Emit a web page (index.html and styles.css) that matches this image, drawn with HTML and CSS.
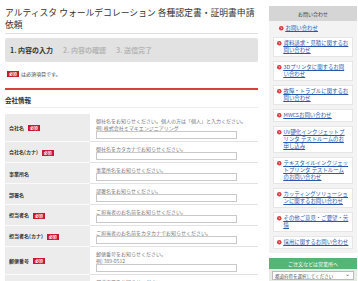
FILE: index.html
```html
<!DOCTYPE html>
<html lang="ja">
<head>
    <meta charset="UTF-8">
    <title>各種認定書・証明書申請依頼</title>
    <link rel="stylesheet" href="styles.css">
</head>
<body>
    <div class="page">
        <!-- Main form -->
        <main class="main">
            <h1 class="title">アルティスタ ウォールデコレーション 各種認定書・証明書申請依頼</h1>

            <ol class="steps">
                <li class="step current">1. 内容の入力</li>
                <li class="step">2. 内容の確認</li>
                <li class="step">3. 送信完了</li>
            </ol>

            <p class="req-note"><span class="req">必須</span>は必須項目です。</p>

            <div class="section">
                <h2 class="section-title">会社情報</h2>
                <table class="form-table">
                    <tr>
                        <th>会社名<span class="req">必須</span></th>
                        <td>
                            <p class="desc">御社名をお知らせください。個人の方は「個人」と入力ください。<br>例) 株式会社ミマキエンジニアリング</p>
                            <div class="input"></div>
                        </td>
                    </tr>
                    <tr>
                        <th>会社名(カナ)<span class="req">必須</span></th>
                        <td>
                            <p class="desc">御社名をカタカナでお知らせください。</p>
                            <div class="input"></div>
                        </td>
                    </tr>
                    <tr>
                        <th>事業所名</th>
                        <td>
                            <p class="desc">事業所名をお知らせください。</p>
                            <div class="input"></div>
                        </td>
                    </tr>
                    <tr>
                        <th>部署名</th>
                        <td>
                            <p class="desc">部署名をお知らせください。</p>
                            <div class="input"></div>
                        </td>
                    </tr>
                    <tr>
                        <th>担当者名<span class="req">必須</span></th>
                        <td>
                            <p class="desc">ご担当者のお名前をお知らせください。</p>
                            <div class="input"></div>
                        </td>
                    </tr>
                    <tr>
                        <th>担当者名(カナ)<span class="req">必須</span></th>
                        <td>
                            <p class="desc">ご担当者のお名前をカタカナでお知らせください。</p>
                            <div class="input"></div>
                        </td>
                    </tr>
                    <tr>
                        <th>郵便番号<span class="req">必須</span></th>
                        <td>
                            <p class="desc">郵便番号をお知らせください。<br>例) 389-0512</p>
                            <div class="input"></div>
                        </td>
                    </tr>
                    <tr>
                        <th>都道府県<span class="req">必須</span></th>
                        <td>
                            <p class="desc">都道府県をお知らせください。</p>
                            <div class="input"></div>
                        </td>
                    </tr>
                </table>
            </div>
        </main>

        <!-- Sidebar -->
        <aside class="side">
            <div class="side-head">お問い合わせ</div>
            <div class="side-body">
                <a class="side-top" href="#"><svg class="ico" viewBox="0 0 10 10"><circle cx="5" cy="5" r="5"/><path d="M4 2.8 L6.2 5 L4 7.2"/></svg><span>お問い合わせ</span></a>
                <ul class="side-list">
                    <li><a href="#"><svg class="ico" viewBox="0 0 10 10"><circle cx="5" cy="5" r="5"/><path d="M4 2.8 L6.2 5 L4 7.2"/></svg><span>資料請求・見積に関するお問い合わせ</span></a></li>
                    <li><a href="#"><svg class="ico" viewBox="0 0 10 10"><circle cx="5" cy="5" r="5"/><path d="M4 2.8 L6.2 5 L4 7.2"/></svg><span>3Dプリンタに関するお問い合わせ</span></a></li>
                    <li><a href="#"><svg class="ico" viewBox="0 0 10 10"><circle cx="5" cy="5" r="5"/><path d="M4 2.8 L6.2 5 L4 7.2"/></svg><span>故障・トラブルに関するお問い合わせ</span></a></li>
                    <li><a href="#"><svg class="ico" viewBox="0 0 10 10"><circle cx="5" cy="5" r="5"/><path d="M4 2.8 L6.2 5 L4 7.2"/></svg><span>MWCSお問い合わせ</span></a></li>
                    <li><a href="#"><svg class="ico" viewBox="0 0 10 10"><circle cx="5" cy="5" r="5"/><path d="M4 2.8 L6.2 5 L4 7.2"/></svg><span>UV硬化インクジェットプリンタ テストルームのお申し込み</span></a></li>
                    <li><a href="#"><svg class="ico" viewBox="0 0 10 10"><circle cx="5" cy="5" r="5"/><path d="M4 2.8 L6.2 5 L4 7.2"/></svg><span>テキスタイルインクジェットプリンタ テストルームのお問い合わせ</span></a></li>
                    <li><a href="#"><svg class="ico" viewBox="0 0 10 10"><circle cx="5" cy="5" r="5"/><path d="M4 2.8 L6.2 5 L4 7.2"/></svg><span>カッティングソリューションに関するお問い合わせ</span></a></li>
                    <li><a href="#"><svg class="ico" viewBox="0 0 10 10"><circle cx="5" cy="5" r="5"/><path d="M4 2.8 L6.2 5 L4 7.2"/></svg><span>その他ご意見・ご要望・苦情</span></a></li>
                    <li><a href="#"><svg class="ico" viewBox="0 0 10 10"><circle cx="5" cy="5" r="5"/><path d="M4 2.8 L6.2 5 L4 7.2"/></svg><span>採用に関するお問い合わせ</span></a></li>
                </ul>
            </div>

            <div class="office-head">ご注文などは営業所へ</div>
            <div class="office-body">
                <div class="select">都道府県を選択してください<span class="caret">&#8964;</span></div>
            </div>
        </aside>
    </div>
</body>
</html>
```

FILE: styles.css
```css
* {
    box-sizing: border-box;
    margin: 0;
    padding: 0;
}

body {
    background: #fff;
    font-family: "Noto Sans CJK JP", "Noto Sans", sans-serif;
    color: #333;
}

.page {
    display: flex;
    align-items: flex-start;
    gap: 11px;
    padding: 0 1px 0 5px;
}

/* main column */
.main {
    width: 253px;
    flex-shrink: 0;
}

.title {
    font-size: 8.8px;
    line-height: 12px;
    font-weight: normal;
    color: #333;
    padding: 7px 0 2px;
    border-bottom: 1px solid #ddd;
}

.steps {
    list-style: none;
    display: flex;
    gap: 10px;
    margin-top: 4px;
    height: 24px;
    align-items: center;
    padding-left: 5px;
    background: #e2e2e2;
    border-radius: 2px;
}

.step {
    font-size: 7px;
    font-weight: bold;
    color: #b5b5b5;
}

.step.current {
    color: #333;
}

.req-note {
    margin-top: 8px;
    font-size: 5px;
    line-height: 8px;
    color: #444;
    display: flex;
    align-items: center;
    padding-left: 2px;
}

.req {
    display: inline-block;
    background: #c8172f;
    color: #fff;
    font-size: 4px;
    line-height: 6px;
    padding: 0 2px;
    margin-right: 2px;
    font-weight: bold;
}

.section {
    margin-top: 10px;
    border-top: 2px solid #d8413a;
}

.section-title {
    font-size: 6.5px;
    line-height: 8px;
    font-weight: bold;
    color: #333;
    margin-top: 6px;
    padding-bottom: 3px;
    border-bottom: 1px solid #eee;
}

.form-table {
    width: 100%;
    margin-top: 6px;
    border-collapse: collapse;
}

.form-table th {
    width: 85px;
    background: #ececec;
    text-align: left;
    font-size: 5px;
    font-weight: bold;
    color: #333;
    padding-left: 4px;
    border-bottom: 1px solid #fafafa;
    vertical-align: middle;
    white-space: nowrap;
}

.form-table th .req {
    margin-left: 4px;
    margin-right: 0;
    vertical-align: middle;
}

.form-table td {
    padding: 3px 2px 2px 6px;
    border-bottom: 1px solid #e2e2e2;
}

.desc {
    font-size: 5px;
    line-height: 7px;
    color: #777;
}

.input {
    width: 141px;
    height: 8px;
    border: 1px solid #c9c9c9;
    background: #fff;
}

/* sidebar */
.side {
    width: 88px;
    flex-shrink: 0;
    margin-top: 6px;
}

.side-head {
    height: 15px;
    line-height: 15px;
    text-align: center;
    background: #d5d5d5;
    font-size: 5px;
    color: #444;
}

.side-body {
    background: #f3f3f3;
    padding: 4px 4px 4px;
}

.side a {
    display: flex;
    align-items: flex-start;
    font-size: 5.4px;
    line-height: 7px;
    color: #2a58b0;
}

.side a span {
    text-decoration: underline;
}

.ico {
    width: 4.5px;
    height: 4.5px;
    flex-shrink: 0;
    margin: 1.2px 2px 0 0;
}

.ico circle {
    fill: #d4363b;
}

.ico path {
    fill: none;
    stroke: #fff;
    stroke-width: 1.6;
}

.side-top {
    padding-left: 6px;
    margin-bottom: 5px;
}

.side-list {
    list-style: none;
    display: flex;
    flex-direction: column;
    gap: 4px;
}

.side-list li {
    background: #fff;
    border: 1px solid #e6e6e6;
    padding: 2px 3px 2px 3px;
}

.side-list span {
    width: 65.6px;
}

.office-head {
    margin-top: 5px;
    height: 11px;
    line-height: 11px;
    background: #55b575;
    color: #fff;
    text-align: center;
    font-size: 5px;
}

.office-body {
    background: #e4ece4;
    padding: 2px 3px;
}

.select {
    display: flex;
    justify-content: space-between;
    align-items: center;
    height: 9px;
    background: #fff;
    border: 1px solid #bbb;
    font-size: 4.5px;
    color: #555;
    padding: 0 3px 0 2px;
}

.caret {
    font-size: 6px;
    line-height: 6px;
    margin-top: -3px;
}
```
